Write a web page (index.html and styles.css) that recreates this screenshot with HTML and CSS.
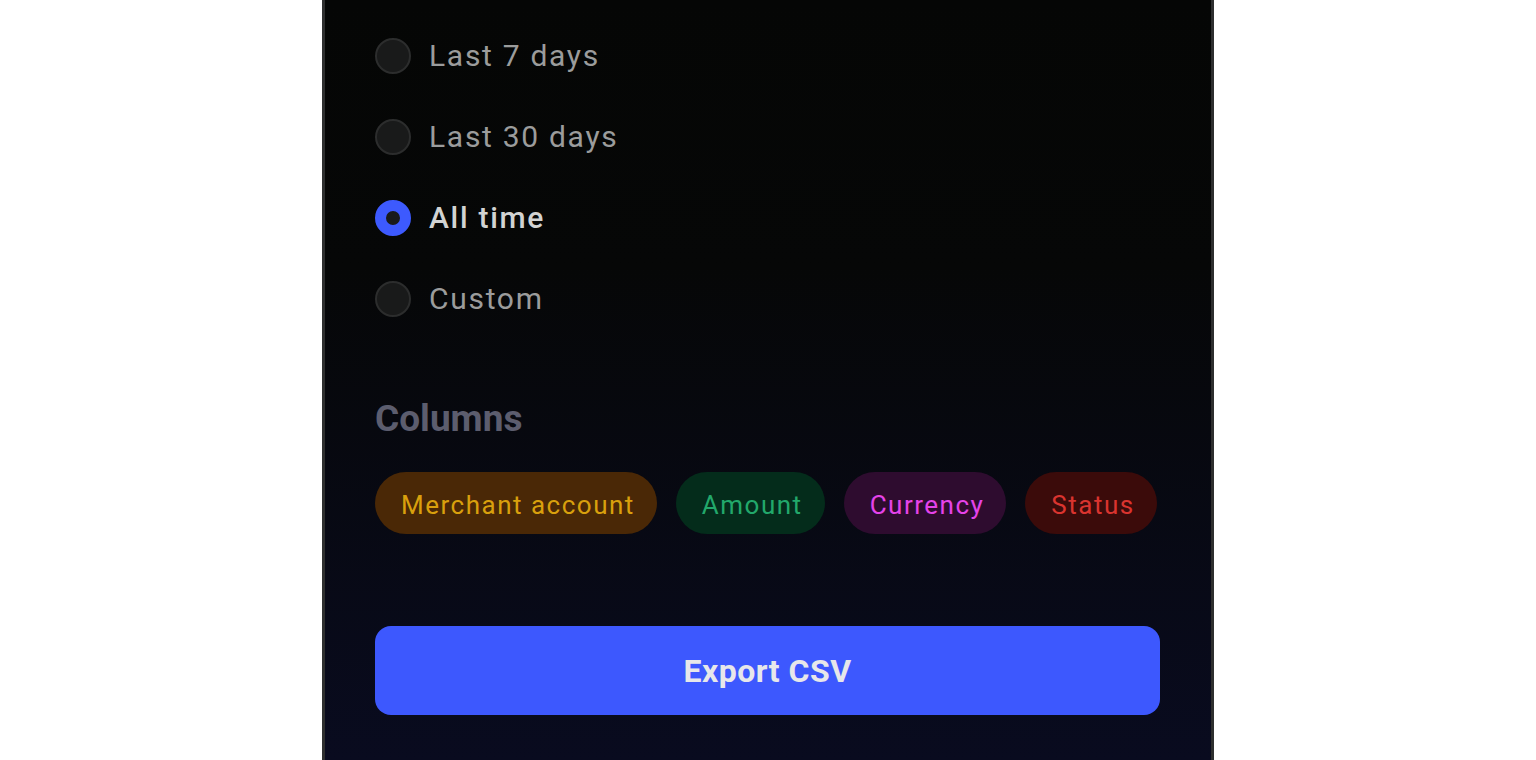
FILE: index.html
```html
<!DOCTYPE html>
<html>
<head>
  <title>Export</title>
  <link rel="stylesheet" href="styles.css">
</head>

<body>
  <div class="sheet">
    <div class="range-list">
      <label class="range-option">
        <span class="radio"></span>
        <span class="range-label">Last 7 days</span>
      </label>
      <label class="range-option">
        <span class="radio"></span>
        <span class="range-label">Last 30 days</span>
      </label>
      <label class="range-option selected">
        <span class="radio"></span>
        <span class="range-label">All time</span>
      </label>
      <label class="range-option">
        <span class="radio"></span>
        <span class="range-label">Custom</span>
      </label>
    </div>

    <h2 class="section-title">Columns</h2>
    <div class="chips">
      <span class="chip chip-merchant">Merchant account</span>
      <span class="chip chip-amount">Amount</span>
      <span class="chip chip-currency">Currency</span>
      <span class="chip chip-status">Status</span>
    </div>

    <button type="button" class="export-button">Export CSV</button>
  </div>
</body>
</html>
```

FILE: styles.css
```css
body {
  font-family: Roboto, "Liberation Sans", sans-serif;
  background-color: #fff;
  margin: 0;
  padding: 0;
}

.sheet {
  box-sizing: border-box;
  width: 892px;
  height: 760px;
  margin: 0 auto;
  padding: 15px 51px 0 50px;
  border-left: 3px solid #2e2f2f;
  border-right: 3px solid #2e2f2f;
  background: linear-gradient(#050605 0%, #060707 35%, #090b1f 100%);
  display: flex;
  flex-direction: column;
  overflow: hidden;
}

.range-list {
  display: flex;
  flex-direction: column;
}

.range-option {
  height: 81px;
  display: flex;
  align-items: center;
  gap: 18px;
}

.radio {
  box-sizing: border-box;
  width: 36px;
  height: 36px;
  border-radius: 50%;
  background-color: #191a1a;
  border: 2px solid #2c2d2d;
}

.range-label {
  font-size: 30px;
  letter-spacing: 1.7px;
  color: #9b9c9c;
}

.range-option.selected .radio {
  background-color: #191a1a;
  border: 11px solid #3d5afe;
}

.range-option.selected .range-label {
  font-weight: 500;
  color: #d2d3d3;
}

.section-title {
  margin: 58px 0 0 0;
  font-size: 37px;
  line-height: 44px;
  font-weight: 700;
  color: #5c5d6e;
}

.chips {
  margin-top: 31px;
  display: flex;
  gap: 19px;
}

.chip {
  box-sizing: border-box;
  flex-shrink: 0;
  white-space: nowrap;
  height: 62px;
  padding: 3px 22px 0 26px;
  border-radius: 31px;
  display: flex;
  align-items: center;
  font-size: 26px;
  letter-spacing: 1.5px;
}

.chip-merchant {
  background-color: #4a2806;
  color: #d9a00d;
}

.chip-amount {
  background-color: #042c1b;
  color: #22a86b;
}

.chip-currency {
  background-color: #2e0c2f;
  color: #e543ea;
}

.chip-status {
  background-color: #3b0b0a;
  color: #da342f;
}

.export-button {
  margin-top: 92px;
  height: 89px;
  width: 100%;
  border: none;
  border-radius: 16px;
  background-color: #3d58fe;
  color: #e7e7ea;
  font-family: Roboto, "Liberation Sans", sans-serif;
  font-size: 32px;
  font-weight: 700;
  letter-spacing: 0.5px;
  cursor: pointer;
}
```
